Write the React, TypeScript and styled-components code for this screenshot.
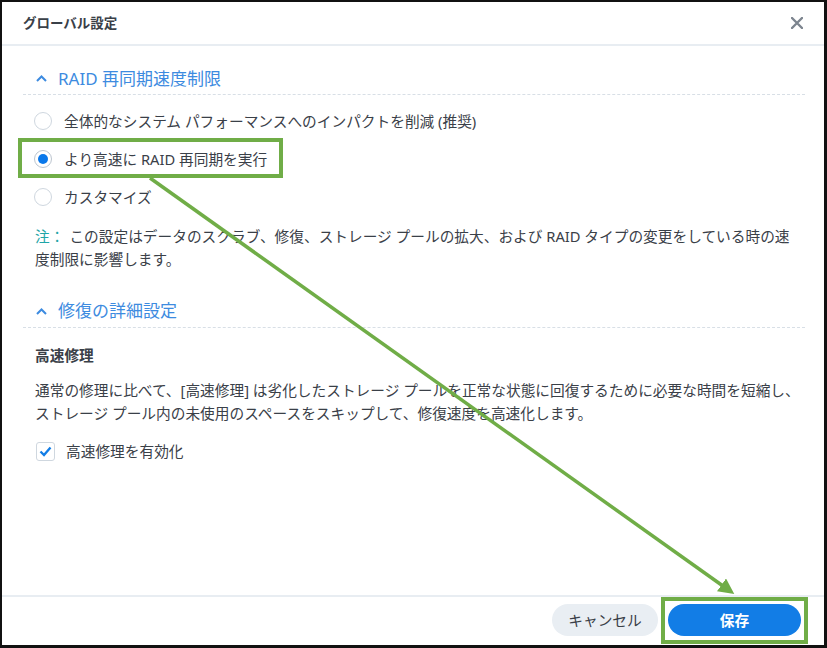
import React from 'react';
import styled, { createGlobalStyle } from 'styled-components';

const GlobalStyle = createGlobalStyle`
	html, body {
		margin: 0;
		padding: 0;
		background: #ffffff;
	}
	body {
		font-family: "Noto Sans", "Noto Sans CJK JP", sans-serif;
	}
`;

const Frame = styled.div`
	position: relative;
	width: 827px;
	height: 648px;
	box-sizing: border-box;
	border-style: solid;
	border-color: #111111;
	border-width: 2px 3px 3px 2px;
	background: #ffffff;
	display: flex;
	flex-direction: column;
	color: #3a4048;
	font-family: "Noto Sans", "Noto Sans CJK JP", sans-serif;
`;

const Header = styled.div`
	height: 42px;
	flex-shrink: 0;
	display: flex;
	align-items: center;
	justify-content: space-between;
	padding: 0 21px;
	border-bottom: 2px solid #e8edf2;
`;

const Title = styled.h1`
	margin: 0;
	font-size: 13.5px;
	font-weight: 600;
	color: #3a4048;
	line-height: 20px;
`;

const CloseButton = styled.button`
	width: 20px;
	height: 20px;
	padding: 0;
	margin-right: -4px;
	border: none;
	background: transparent;
	display: flex;
	align-items: center;
	justify-content: center;
	cursor: pointer;
`;

const Body = styled.div`
	flex: 1;
	padding: 0 19px 0 21px;
`;

const SectionHeader = styled.div<{ top: number }>`
	margin-top: ${({ top }) => top}px;
	height: 32px;
	box-sizing: border-box;
	display: flex;
	align-items: center;
	gap: 11px;
	padding-left: 13px;
	border-bottom: 1px dashed #d8dfe6;
	color: #3d8be0;
	font-size: 17px;
	line-height: 24px;
`;

const RadioList = styled.div`
	padding-top: 7px;
	padding-left: 11px;
	display: flex;
	flex-direction: column;
`;

const OptionRow = styled.label`
	height: 38px;
	display: flex;
	align-items: center;
	gap: 12px;
	font-size: 14.7px;
	line-height: 22px;
`;

const RadioCircle = styled.span<{ checked?: boolean }>`
	width: 18px;
	height: 18px;
	box-sizing: border-box;
	border-radius: 50%;
	border: 1px solid ${({ checked }) => (checked ? '#bcc5cf' : '#cfd7df')};
	background: #ffffff;
	display: flex;
	align-items: center;
	justify-content: center;

	&::after {
		content: '';
		display: ${({ checked }) => (checked ? 'block' : 'none')};
		width: 10px;
		height: 10px;
		border-radius: 50%;
		background: #0a78ea;
	}
`;

const Note = styled.p`
	margin: 7.5px 13px 0 12px;
	font-size: 14.7px;
	line-height: 23px;
`;

const NoteLabel = styled.span`
	display: inline-block;
	color: #1fa6a8;
	font-family: "Noto Sans CJK JP", sans-serif;
	margin-right: 5px;
`;

const SubTitle = styled.div`
	margin: 16px 0 0 12px;
	font-size: 14.7px;
	font-weight: 700;
	line-height: 22px;
`;

const Paragraph = styled.p`
	margin: 13.5px 0 0 12px;
	font-size: 14.7px;
	line-height: 23px;
`;

const CheckRow = styled.label`
	margin: 11px 0 0 13px;
	height: 30px;
	display: flex;
	align-items: center;
	gap: 11px;
	font-size: 14.7px;
	line-height: 22px;
`;

const CheckBox = styled.span`
	width: 19px;
	height: 19px;
	box-sizing: border-box;
	border-radius: 3px;
	border: 1px solid #cfd7df;
	display: flex;
	align-items: center;
	justify-content: center;
`;

const Footer = styled.div`
	height: 48px;
	flex-shrink: 0;
	border-top: 2px solid #e8edf2;
	display: flex;
	align-items: center;
	justify-content: flex-end;
	gap: 10px;
	padding: 0 23px 0 0;
`;

const Button = styled.button<{ primary?: boolean }>`
	height: 32px;
	width: ${({ primary }) => (primary ? 133 : 106)}px;
	margin-top: -3px;
	border: none;
	border-radius: 16px;
	background: ${({ primary }) => (primary ? '#127de6' : '#e9eef3')};
	color: ${({ primary }) => (primary ? '#ffffff' : '#3a4048')};
	font-family: "Noto Sans", "Noto Sans CJK JP", sans-serif;
	font-size: 14.7px;
	font-weight: ${({ primary }) => (primary ? 700 : 400)};
	cursor: pointer;
`;

const Annotations = styled.svg`
	position: absolute;
	left: -2px;
	top: -2px;
	width: 827px;
	height: 648px;
	pointer-events: none;
`;

const Chevron = () => (
	<svg width="11" height="7" viewBox="0 0 11 7">
		<polyline points="1,6 5.5,1.5 10,6" fill="none" stroke="#3d8be0" strokeWidth="2" />
	</svg>
);

export default function App() {
	return (
		<>
			<GlobalStyle />
			<Frame>
				<Header>
					<Title>グローバル設定</Title>
					<CloseButton aria-label="close">
						<svg width="12" height="12" viewBox="0 0 12 12">
							<path d="M1 1 L11 11 M11 1 L1 11" stroke="#7d858f" strokeWidth="2.4" strokeLinecap="round" />
						</svg>
					</CloseButton>
				</Header>
				<Body>
					<SectionHeader top={17}>
						<Chevron />
						<span>RAID 再同期速度制限</span>
					</SectionHeader>
					<RadioList>
						<OptionRow>
							<RadioCircle />
							全体的なシステム パフォーマンスへのインパクトを削減 (推奨)
						</OptionRow>
						<OptionRow>
							<RadioCircle checked />
							より高速に RAID 再同期を実行
						</OptionRow>
						<OptionRow>
							<RadioCircle />
							カスタマイズ
						</OptionRow>
					</RadioList>
					<Note>
						<NoteLabel>注：</NoteLabel>この設定はデータのスクラブ、修復、ストレージ プールの拡大、および RAID タイプの変更をしている時の速度制限に影響します。
					</Note>
					<SectionHeader top={25}>
						<Chevron />
						<span>修復の詳細設定</span>
					</SectionHeader>
					<SubTitle>高速修理</SubTitle>
					<Paragraph>
						通常の修理に比べて、[高速修理] は劣化したストレージ プールを正常な状態に回復するために必要な時間を短縮し、
						<br />
						ストレージ プール内の未使用のスペースをスキップして、修復速度を高速化します。
					</Paragraph>
					<CheckRow>
						<CheckBox>
							<svg width="13" height="11" viewBox="0 0 13 11">
								<polyline points="1.5,5.5 5,9 11.5,1.5" fill="none" stroke="#127de6" strokeWidth="2.3" />
							</svg>
						</CheckBox>
						高速修理を有効化
					</CheckRow>
				</Body>
				<Footer>
					<Button>キャンセル</Button>
					<Button primary>保存</Button>
				</Footer>
				<Annotations viewBox="0 0 827 648">
					<defs>
						<marker id="head" markerWidth="4.5" markerHeight="4.5" refX="3" refY="2.25" orient="auto" markerUnits="strokeWidth">
							<path d="M0,0 L4.5,2.25 L0,4.5 Z" fill="#70ad47" />
						</marker>
					</defs>
					<rect x="20" y="140" width="261" height="36" fill="none" stroke="#70ad47" strokeWidth="4" />
					<rect x="663" y="599" width="143" height="43" fill="none" stroke="#70ad47" strokeWidth="4" />
					<line x1="150" y1="178" x2="730" y2="591" stroke="#70ad47" strokeWidth="3.5" markerEnd="url(#head)" />
				</Annotations>
			</Frame>
		</>
	);
}
